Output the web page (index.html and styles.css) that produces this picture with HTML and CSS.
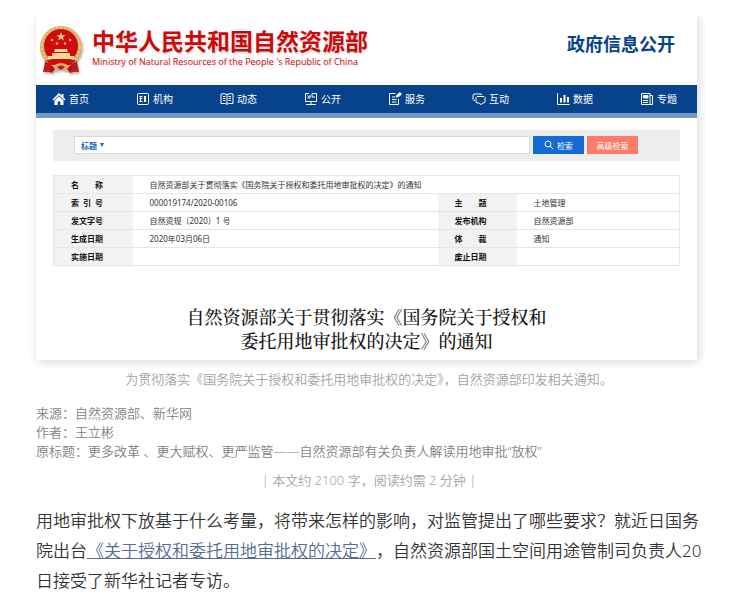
FILE: index.html
```html
<!DOCTYPE html>
<html lang="zh-CN">
<head>
  <meta charset="UTF-8">
  <meta name="viewport" content="width=device-width, initial-scale=1">
  <title>自然资源部解读用地审批“放权”</title>
  <link rel="stylesheet" href="styles.css">
</head>
<body>

  <main class="article">

    <section class="card">
      <header class="site-header">
        <svg class="emblem" viewBox="0 0 44 48" aria-hidden="true">
          <path d="M7 31 L4 46 Q9 45 13 47 L17 42 L27 42 L31 47 Q35 45 40 46 L37 31Z" fill="#c4161c"/>
          <circle cx="22" cy="21" r="21" fill="#d9b061"/>
          <circle cx="22" cy="21" r="19" fill="none" stroke="#e6c98a" stroke-width="2" stroke-dasharray="2 2"/>
          <circle cx="22" cy="20" r="17" fill="#d20a10"/>
          <path d="M22 6l1.2 3.2h3.4l-2.7 2 1 3.3-2.9-2-2.9 2 1-3.3-2.7-2h3.4z" fill="#f0cf80"/>
          <g fill="#e5b95f">
            <circle cx="13" cy="14" r="1.3"/><circle cx="31" cy="14" r="1.3"/>
            <circle cx="18" cy="17.5" r="1.3"/><circle cx="26" cy="17.5" r="1.3"/>
          </g>
          <path d="M16 23h12l1 3h-14zM13 27h18v3h4v3H9v-3h4z" fill="#f3d995"/>
          <path d="M7 34h30l-5 5H12z" fill="#d20a10"/>
          <path d="M14 40q8-6 16 0l-3 5q-5-4-10 0z" fill="#d9b061"/>
          <path d="M18 41q4-3 8 0l-4 3z" fill="#c4161c"/>
          <path d="M8 37q5 1 5 8M36 37q-5 1-5 8" fill="none" stroke="#8f0c10"/>
        </svg>
        <div class="site-name">
          <h1>中华人民共和国自然资源部</h1>
          <p>Ministry of Natural Resources of the People 's Republic of China</p>
        </div>
        <strong class="channel">政府信息公开</strong>
      </header>

      <nav class="nav">
        <a href="#">
          <svg viewBox="0 0 14 14"><path d="M7 1L0.5 7.5l1 1L7 3.200l5.5 5.300 1-1L11.5 5.400V2h-2v1.5z" fill="currentColor"/><path d="M2.5 8.5L7 4.300l4.5 4.200V13H8.300V9.5H5.700V13H2.5z" fill="currentColor"/></svg>
          首页</a>
        <a href="#">
          <svg viewBox="0 0 14 14" class="line"><rect x="1.5" y="1.5" width="11" height="11" rx="1"/><path d="M3.5 4.5h3M3.5 6.5h3M3.5 9.5h3M4.5 4v6"/><path d="M9 4v6" stroke-width="2"/></svg>
          机构</a>
        <a href="#">
          <svg viewBox="0 0 14 14" class="line"><path d="M7 2.5Q4 1 1 2v9.5h4.5L7 12.5l1.5-1H13V2Q10 1 7 2.5zV12M3 4.5h2.5M3 6.5h2.5M3 8.5h2.5M8.5 4.5H11M8.5 6.5H11M8.5 8.5H11"/></svg>
          动态</a>
        <a href="#">
          <svg viewBox="0 0 14 14" class="line"><path d="M5 1.5H1.5v8h11v-8H8M7 9.5V12M2 12.5h10M5.5 12.5h3M3.5 3.5l2 2M6 3v3H3.5M8 1.5V5h3"/></svg>
          公开</a>
        <a href="#">
          <svg viewBox="0 0 14 14" class="line"><path d="M7.5 1.5h-6v11h9V7M4 5h3M4 7.5h4.5M4 10h4.5"/><path d="M8 5l1-2 3-2.5L13.5 2 11 4.5z" fill="currentColor"/></svg>
          服务</a>
        <a href="#">
          <svg viewBox="0 0 14 14" class="line"><path d="M3 8.5H2L1 7.5V3l1-1h7l1 1"/><path d="M5 4.5h7l1 1V10l-1 1h-1.5L9 12.8 7.5 11H5l-1-1V5.5z"/></svg>
          互动</a>
        <a href="#">
          <svg viewBox="0 0 14 14" class="line"><path d="M1.5 1v11.5h12"/><path d="M5 10.500V6M8.500 10.500V3M12 10.500V5" stroke-width="2"/></svg>
          数据</a>
        <a href="#">
          <svg viewBox="0 0 14 14" class="line"><path d="M1.5 1.5h8.5v11H1.5zM10 3.5h2.5v9H10M3 8.5h5M3 10.5h5"/><path d="M3.5 3.5h4.5V6H3.5z" fill="currentColor"/></svg>
          专题</a>
      </nav>

      <form class="search">
        <div class="search-field">
          <select aria-label="检索字段">
            <option>标题</option>
          </select>
          <svg class="arrow" viewBox="0 0 4 4" aria-hidden="true"><path d="M0 0h4L2 4z"/></svg>
          <input type="text" aria-label="检索内容">
        </div>
        <button type="submit" class="btn">
          <svg viewBox="0 0 10 10" aria-hidden="true"><circle cx="4" cy="4" r="3"/><path d="M6 6l3 3"/></svg>
          检索</button>
        <button type="button" class="btn btn-advanced">高级检索</button>
      </form>

      <table class="info">
        <colgroup>
          <col class="col-label"><col class="col-main"><col class="col-label"><col class="col-side">
        </colgroup>
        <tr>
          <th scope="row">名　　称</th>
          <td colspan="3">自然资源部关于贯彻落实《国务院关于授权和委托用地审批权的决定》的通知</td>
        </tr>
        <tr>
          <th scope="row">索&ensp;引&ensp;号</th>
          <td>000019174/2020-00106</td>
          <th scope="row">主　　题</th>
          <td>土地管理</td>
        </tr>
        <tr>
          <th scope="row">发文字号</th>
          <td>自然资规〔2020〕1 号</td>
          <th scope="row">发布机构</th>
          <td>自然资源部</td>
        </tr>
        <tr>
          <th scope="row">生成日期</th>
          <td>2020年03月06日</td>
          <th scope="row">体　　裁</th>
          <td>通知</td>
        </tr>
        <tr>
          <th scope="row">实施日期</th>
          <td></td>
          <th scope="row">废止日期</th>
          <td></td>
        </tr>
      </table>

      <h2 class="notice-title">自然资源部关于贯彻落实《国务院关于授权和<br>委托用地审批权的决定》的通知</h2>
    </section>

    <p class="caption">为贯彻落实《国务院关于授权和委托用地审批权的决定》，自然资源部印发相关通知。</p>

    <div class="meta">
      <p>来源：自然资源部、新华网</p>
      <p>作者：王立彬</p>
      <p>原标题：更多改革 、更大赋权、更严监管——自然资源部有关负责人解读用地审批“放权”</p>
    </div>

    <p class="reading">| 本文约 2100 字，阅读约需 2 分钟 |</p>

    <p class="text">用地审批权下放基于什么考量，将带来怎样的影响，对监管提出了哪些要求？就近日国务院出台<a href="#">《关于授权和委托用地审批权的决定》</a>，自然资源部国土空间用途管制司负责人20日接受了新华社记者专访。</p>

  </main>

</body>
</html>
```
FILE: styles.css
```css
* {
  box-sizing: border-box;
}

body {
  margin: 0;
  background: #fff;
  color: #333;
  font-family: "Noto Sans", "Noto Sans CJK SC", sans-serif;
}

h1, h2, p {
  margin: 0;
}

.article {
  padding: 15px 34px 12px 36px;
}

/* the shadow shows on the sides and the bottom only */
.card {
  margin-right: 5px;
  padding-bottom: 8px;
  background: #fff;
  box-shadow: 2px 2px 10px rgba(0, 0, 0, 0.15);
  clip-path: inset(0 -8px -8px -8px);
}

.site-header {
  display: flex;
  align-items: center;
  height: 70px;
  padding: 0 22px 0 3px;
}

.emblem {
  width: 44px;
  height: 48px;
  margin-right: 9px;
  filter: drop-shadow(1px 2px 1px rgba(0, 0, 0, 0.3));
}

.site-name {
  padding-bottom: 4px;
  color: #cc0a0a;
  white-space: nowrap;
  text-shadow: 1px 2px 2px rgba(0, 0, 0, 0.15);
}

.site-name h1 {
  font-size: 23px;
  line-height: 28px;
}

.site-name p {
  font-family: "Open Sans", sans-serif;
  font-size: 9px;
  line-height: 14px;
}

.channel {
  margin-left: auto;
  margin-bottom: 12px;
  color: #07438c;
  font-size: 18px;
  line-height: 24px;
}

.nav {
  display: flex;
  justify-content: space-between;
  padding: 0 20px 0 16px;
  background: #07438c;
  border-bottom: 5px solid #7598c3;
}

.nav a {
  display: flex;
  align-items: center;
  gap: 3px;
  color: #fff;
  font-size: 10px;
  line-height: 28px;
  text-decoration: none;
}

.nav svg {
  width: 14px;
  height: 14px;
}

.line {
  fill: none;
  stroke: currentColor;
}

.search {
  display: flex;
  align-items: center;
  gap: 3px;
  margin: 12px 17px 14px;
  padding: 6px 42px 7px 21px;
  background: #ededed;
}

.search-field {
  display: flex;
  flex: 1;
  align-items: center;
  height: 18px;
  padding-left: 6px;
  background: #fff;
  border: 1px solid #d9d9d9;
}

.search-field select {
  appearance: none;
  padding: 0;
  border: 0;
  background: none;
  color: #1268bd;
  font: bold 8px "Noto Sans CJK SC", sans-serif;
}

.arrow {
  width: 4px;
  height: 4px;
  margin-left: 3px;
  fill: #1268bd;
}

.search-field input {
  flex: 1;
  min-width: 0;
  height: 14px;
  border: 0;
  outline: 0;
  background: none;
  font-size: 8px;
}

.btn {
  display: flex;
  align-items: center;
  justify-content: center;
  gap: 3px;
  width: 51px;
  height: 18px;
  padding: 0;
  border: 0;
  background: #146bd5;
  color: #fff;
  font: 8px "Noto Sans CJK SC", sans-serif;
  cursor: pointer;
}

.btn svg {
  width: 10px;
  height: 10px;
  fill: none;
  stroke: currentColor;
}

.btn-advanced {
  background: #fc7b69;
}

.info {
  width: calc(100% - 34px);
  margin: 0 17px;
  border-collapse: collapse;
  table-layout: fixed;
  border: 1px solid #e6e6e6;
  font-size: 8px;
  line-height: 17px;
}

.col-label {
  width: 79px;
}

.col-side {
  width: 163px;
}

.info tr {
  height: 18px;
  border-bottom: 1px solid #e6e6e6;
}

.info th,
.info td {
  padding: 0 0 0 17px;
  text-align: left;
  white-space: nowrap;
}

.info th {
  background: #f2f2f2;
  color: #111;
}

.notice-title {
  margin-top: 38px;
  color: #111;
  font-family: "Noto Serif CJK SC", "Noto Sans CJK SC", serif;
  font-size: 18px;
  font-weight: 500;
  line-height: 24px;
  text-align: center;
}

.caption,
.meta,
.reading {
  font-size: 13px;
  font-weight: 350;
  line-height: 19px;
}

.caption,
.reading {
  margin-top: 10px;
  color: #a3a3a3;
  text-align: center;
}

.meta {
  margin-top: 15px;
  color: #7f7f7f;
}

.text {
  margin-top: 16px;
  font-size: 17px;
  font-weight: 350;
  line-height: 30px;
  text-spacing-trim: space-all;
}

.text a {
  color: #576b95;
}
```
